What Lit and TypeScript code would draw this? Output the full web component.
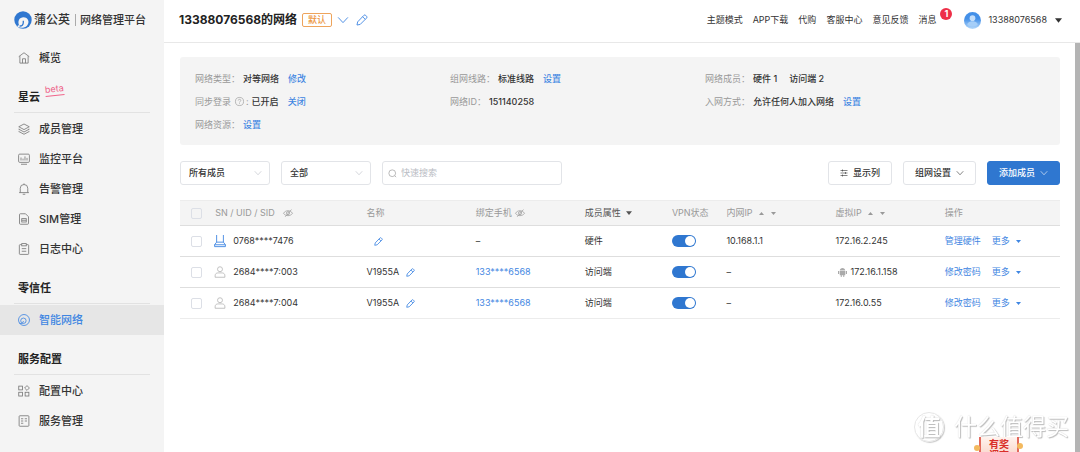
import { LitElement, html, css, svg, nothing } from "lit";
import { customElement, property } from "lit/decorators.js";
import { classMap } from "lit/directives/class-map.js";

const ICONS: Record<string, unknown> = {
  home: svg`<path d="M1 6.2 8 1l7 5.2M2.5 5.5v9.3h11V5.5M6 14.8V9h4v5.8"/>`,
  layers: svg`<path d="M8 1.3 15 5 8 8.8 1 5zM1.6 7.8 1 8.2 8 12l7-3.8-.6-.4M1.6 10.9l-.6.4L8 15l7-3.7-.6-.4"/>`,
  monitor: svg`<rect x=".8" y="1.5" width="14.4" height="11" rx="1.5"/><path d="M4 15h8M4 6v4M6.7 7.5V10M9.3 4.5V10M12 6.5V10"/>`,
  bell: svg`<path d="M1.5 12.8h13M3 12.8V7a5 5 0 0 1 10 0v5.8M8 .6V2M6.3 15h3.4"/>`,
  sim: svg`<path d="M2 2.2Q2 1 3.2 1H10l4 4v8.8q0 1.2-1.2 1.2H3.2Q2 15 2 13.8z"/><rect x="5" y="7.5" width="6" height="4.5"/><path d="M5 9.7h6"/>`,
  clipboard: svg`<rect x="1.8" y="2.2" width="12.4" height="13" rx="1"/><rect x="5" y=".8" width="6" height="3" fill="#f4f4f4"/><path d="M5 7.5h6M5 11h6"/>`,
  orbit: svg`<circle cx="8" cy="8" r="7.3"/><circle cx="7.2" cy="9" r="3.6"/><path d="M1.5 11.8c1.300 1.400 3.500 1.200 5.200-.4l.5-2"/>`,
  grid: svg`<rect x="1" y="1.5" width="5" height="5"/><path d="m12 .8 3.2 3.2L12 7.2 8.8 4z"/><rect x="1" y="9.7" width="5" height="5"/><rect x="9.5" y="9.7" width="5" height="5"/>`,
  list: svg`<rect x="1.5" y="1" width="13" height="14" rx="1"/><path d="M4 5h3M9 5h3M4 8h3M9 8h3M4 11h3"/>`,
  chevron: svg`<path d="m1.5 4.5 6.5 7 6.5-7"/>`,
  pencil: svg`<path d="m1.3 14.7.9-4.2 8.3-8.7q1.200-1.200 2.400 0l1.200 1.200q1.200 1.200 0 2.400L5.600 13.900zM8.800 3.600l3.500 3.500"/>`,
  search: svg`<circle cx="7.5" cy="7.5" r="6"/><path d="m12 12 2.5 2.5"/>`,
  sliders: svg`<path d="M1 3h14M1 8h14M1 13h14M5 1v4M11 6v4M5 11v4"/>`,
  help: svg`<circle cx="8" cy="8" r="7.2"/><path d="M5.7 6.3C5.7 3.3 10.3 3.4 10.3 6.2 10.3 7.800 8 8 8 9.800M8 11.200v1.400"/>`,
  eyeoff: svg`<path d="M.8 8.500C4 3 12 3 15.200 8.500 12 13.500 4 13.500.8 8.500zM13.500 2.500 3.500 14"/><circle cx="8" cy="8.300" r="2.500"/>`,
  router: svg`<path d="M3.500 0v9.500M12.500 0v9.500M3.500 9.500h9l2.700 3.500v2.500H.8V13zM.8 13h14.400"/>`,
  user: svg`<circle cx="8" cy="4.300" r="3.300"/><path d="M1.500 15v-1.800c0-4.300 3-4 6.500-4s6.500-.3 6.500 4V15z"/>`,
};

const icon = (name: string, cls = "") =>
  html`<svg class="icon ${cls}" viewBox="0 0 16 16" aria-hidden="true">${ICONS[name]}</svg>`;

const caret = (up = false, cls = "") =>
  html`<svg class="caret ${cls}" viewBox="0 0 8 8" aria-hidden="true"><path d=${up ? "M0 6.5 4 1.5l4 5z" : "M0 1.5h8l-4 5z"} /></svg>`;

const base = css`
  * { box-sizing: border-box; }
  a { color: #3f86e2; text-decoration: none; }
  button, input, select { font: inherit; color: inherit; margin: 0; }
  .icon {
    width: 12px; height: 12px; flex: none; fill: none;
    stroke: currentColor; stroke-width: 1.2; overflow: visible;
  }
  .caret { width: 6px; height: 6px; flex: none; fill: currentColor; }
`;

interface NavItem { icon: string; label: string; active?: boolean }
interface NavGroup { title?: string; beta?: boolean; items: NavItem[] }

const NAV: NavGroup[] = [
  { items: [{ icon: "home", label: "概览" }] },
  {
    title: "星云", beta: true,
    items: [
      { icon: "layers", label: "成员管理" },
      { icon: "monitor", label: "监控平台" },
      { icon: "bell", label: "告警管理" },
      { icon: "sim", label: "SIM管理" },
      { icon: "clipboard", label: "日志中心" },
    ],
  },
  { title: "零信任", items: [{ icon: "orbit", label: "智能网络", active: true }] },
  {
    title: "服务配置",
    items: [{ icon: "grid", label: "配置中心" }, { icon: "list", label: "服务管理" }],
  },
];

@customElement("side-nav")
export class SideNav extends LitElement {
  static styles = [base, css`
    :host { display: block; background: #f4f4f4; color: #333; font-size: 11px; }
    .brand { display: flex; align-items: center; height: 43px; padding: 0 14px 4px; white-space: nowrap; }
    .logo { width: 18px; height: 18px; margin-right: 2px; flex: none; }
    .name { font-size: 12px; font-weight: 500; }
    .product { margin-left: 5px; padding-left: 4px; border-left: 1px solid #aaa; line-height: 12px; font-weight: 500; }
    .item {
      display: flex; align-items: center; gap: 9px; height: 30px;
      padding-left: 18px; color: #333; font-weight: 500;
    }
    .item .icon { color: #777; stroke-width: 1.1; }
    .active { background: #e6e6e6; color: #3f86e2; }
    .active .icon { color: #3f86e2; }
    .title {
      display: flex; gap: 5px; margin: 0 14px 1px; padding: 16px 4px 7px;
      border-bottom: 1px solid #e2e2e2; font-size: 11px; line-height: 16px; font-weight: 700; color: #222;
    }
    .beta {
      align-self: flex-start; height: 12px; border-bottom: 1px solid #f0648a;
      color: #ee6288; font-size: 9px; line-height: 10px; font-weight: 400; transform: translateY(-5px) rotate(-6deg);
    }
  `];

  render() {
    return html`
      <div class="brand">
        <svg class="logo" viewBox="0 0 18 18" aria-hidden="true">
          <circle cx="9" cy="9" r="8.7" fill="#2f77d0" />
          <path d="M2 14.500C3.500 15.300 4.600 14.900 4.900 13.800 3.500 10 5.600 6.300 9.400 6.300c4.800 0 6.700 5.200 3.600 8.400-2.400 2.400-6.500 2.500-8.800 1.300z" fill="#f4f4f4" />
          <path d="M5.600 15c2.200.2 3.700-1 3.700-3.400V9.800" fill="none" stroke="#2f77d0" stroke-width="1.300" />
        </svg>
        <span class="name">蒲公英</span><span class="product">网络管理平台</span>
      </div>
      <nav>
        ${NAV.map((g) => html`
          ${g.title
            ? html`<div class="title">${g.title}${g.beta ? html`<span class="beta">beta</span>` : nothing}</div>`
            : nothing}
          ${g.items.map((i) => html`
            <a href="#" class=${classMap({ item: true, active: !!i.active })}>${icon(i.icon)}${i.label}</a>`)}
        `)}
      </nav>`;
  }
}

@customElement("top-bar")
export class TopBar extends LitElement {
  @property() account = "13388076568";

  static styles = [base, css`
    :host {
      display: flex; align-items: center; height: 43px; padding: 0 18px 2px 15px;
      border-bottom: 1px solid #e8e8e8; color: #333; white-space: nowrap;
    }
    h1 { margin: 0 5px 0 0; font-size: 12px; font-weight: 700; color: #222; }
    .tag {
      padding: 0 5px; border: 1px solid #eea45c; border-radius: 2px;
      color: #ec963f; font-size: 9px; line-height: 12px; font-weight: 500;
    }
    .bare { display: flex; padding: 0; border: 0; background: none; color: #3f86e2; }
    .tag + .bare { margin: 0 7px 0 5px; }
    .links { display: flex; gap: 10px; margin-left: auto; }
    .links a { position: relative; color: #333; }
    .badge {
      position: absolute; left: 22px; top: -5px; width: 12px; height: 12px; border-radius: 50%;
      background: #ee2f48; color: #fff; font-size: 9px; line-height: 12px; text-align: center; font-weight: 700;
    }
    .avatar { width: 17px; height: 17px; margin: 0 7px 0 28px; }
    .user { display: flex; align-items: center; gap: 8px; padding: 0; border: 0; background: none; }
    .user .caret { width: 7px; height: 7px; }
  `];

  render() {
    return html`
      <h1>${this.account}的网络</h1>
      <span class="tag">默认</span>
      <button class="bare" aria-label="切换网络">${icon("chevron")}</button>
      <button class="bare" aria-label="重命名">${icon("pencil")}</button>
      <nav class="links">
        ${["主题模式", "APP下载", "代购", "客服中心", "意见反馈"].map((t) => html`<a href="#">${t}</a>`)}
        <a href="#">消息<span class="badge">1</span></a>
      </nav>
      <svg class="avatar" viewBox="0 0 18 18" aria-hidden="true">
        <defs><linearGradient id="g" x2="0" y2="1"><stop offset=".4" stop-color="#4490e8" /><stop offset="1" stop-color="#b5d9fb" /></linearGradient></defs>
        <circle cx="9" cy="9" r="9" fill="url(#g)" />
        <circle cx="9" cy="6.5" r="3" fill="#c3defa" />
        <path d="M3.5 13.5c0-5 11-5 11 0-2.5 2.5-8.5 2.5-11 0z" fill="#a5cef8" />
      </svg>
      <button class="user">${this.account}${caret()}</button>`;
  }
}

@customElement("network-info")
export class NetworkInfo extends LitElement {
  static styles = [base, css`
    :host {
      display: grid; grid-template-columns: 30% 30% 1fr; padding: 10px 15px 9px;
      background: #f4f4f4; border-radius: 3px; white-space: nowrap;
    }
    dl { margin: 0; }
    .row { display: flex; align-items: center; height: 23px; }
    dt { display: flex; align-items: center; color: #999; }
    dd { margin: 0 0 0 3px; color: #333; font-weight: 500; }
    dd + dd { margin-left: 9px; }
    .members { margin-left: 12px; }
    .icon { width: 9px; height: 9px; margin: 0 2px 0 4px; }
  `];

  render() {
    return html`
      <dl>
        <div class="row"><dt>网络类型：</dt><dd>对等网络</dd><dd><a href="#">修改</a></dd></div>
        <div class="row"><dt>同步登录${icon("help")}:</dt><dd>已开启</dd><dd><a href="#">关闭</a></dd></div>
        <div class="row"><dt>网络资源：</dt><dd><a href="#">设置</a></dd></div>
      </dl>
      <dl>
        <div class="row"><dt>组网线路：</dt><dd>标准线路</dd><dd><a href="#">设置</a></dd></div>
        <div class="row"><dt>网络ID：</dt><dd>151140258</dd></div>
      </dl>
      <dl>
        <div class="row"><dt>网络成员：</dt><dd>硬件 1<span class="members">访问端 2</span></dd></div>
        <div class="row"><dt>入网方式：</dt><dd>允许任何人加入网络</dd><dd><a href="#">设置</a></dd></div>
      </dl>`;
  }
}

@customElement("member-toolbar")
export class MemberToolbar extends LitElement {
  static styles = [base, css`
    :host { display: flex; gap: 11px; color: #333; white-space: nowrap; }
    .box {
      display: flex; align-items: center; height: 24px;
      border: 1px solid #e2e4e8; border-radius: 3px; background: #fff;
    }
    .select { display: grid; width: 90px; align-items: center; }
    select {
      grid-area: 1 / 1; width: 100%; height: 22px; padding: 0 24px 0 8px;
      border: 0; background: none; appearance: none; outline: none; font-weight: 500;
    }
    .select .icon { grid-area: 1 / 1; justify-self: end; width: 8px; height: 8px; margin-right: 7px; color: #b8bcc4; pointer-events: none; }
    .search { flex: 0 1 180px; gap: 4px; padding: 0 5px; }
    .search .icon { width: 9px; height: 9px; color: #999; }
    input { flex: 1; min-width: 0; padding: 0; border: 0; outline: none; background: none; }
    input::placeholder { color: #b9bcc4; opacity: 1; }
    .actions { display: flex; gap: 11px; margin-left: auto; }
    button { gap: 5px; padding: 0 11px; font-weight: 500; }
    button .icon { width: 8px; height: 8px; }
    .primary { background: #2f77d0; border-color: #2f77d0; color: #fff; }
  `];

  render() {
    return html`
      <label class="box select"><select aria-label="成员类型"><option>所有成员</option></select>${icon("chevron")}</label>
      <label class="box select"><select aria-label="状态"><option>全部</option></select>${icon("chevron")}</label>
      <label class="box search">${icon("search")}<input type="search" aria-label="快速搜索" placeholder="快速搜索" /></label>
      <div class="actions">
        <button class="box">${icon("sliders")}显示列</button>
        <button class="box">组网设置${icon("chevron")}</button>
        <button class="box primary">添加成员${icon("chevron")}</button>
      </div>`;
  }
}

interface Member {
  sn: string; device: string; name?: string; phone?: string; kind: string;
  lan: string; ip: string; android?: boolean; action: string;
}

const MEMBERS: Member[] = [
  { sn: "0768****7476", device: "router", kind: "硬件", lan: "10.168.1.1", ip: "172.16.2.245", action: "管理硬件" },
  { sn: "2684****7:003", device: "user", name: "V1955A", phone: "133****6568", kind: "访问端", lan: "–", ip: "172.16.1.158", android: true, action: "修改密码" },
  { sn: "2684****7:004", device: "user", name: "V1955A", phone: "133****6568", kind: "访问端", lan: "–", ip: "172.16.0.55", action: "修改密码" },
];

@customElement("member-table")
export class MemberTable extends LitElement {
  static styles = [base, css`
    :host { display: block; color: #333; }
    table { width: 100%; border-collapse: collapse; table-layout: fixed; white-space: nowrap; }
    th, td { height: 31px; padding: 0; text-align: left; font-weight: 400; border-bottom: 1px solid #dedede; }
    th { height: 25px; background: #f4f4f4; color: #999; border-top: 1px solid #ececec; }
    tbody tr:last-child td { border-bottom-color: #ececec; }
    .check { width: 4%; padding-left: 11px; }
    .sn { width: 17.2%; }
    .mid { width: 12.4%; }
    .kind { width: 9.9%; }
    .vpn { width: 6.2%; }
    .cell { display: flex; align-items: center; }
    .dark { color: #555; }
    .box {
      display: block; appearance: none; width: 11px; height: 11px; margin: 0;
      border: 1px solid #dcdfe6; border-radius: 2px;
    }
    .eye { width: 10px; height: 10px; margin-left: 8px; color: #999; }
    .near { margin-left: 3px; }
    .caret { margin-left: 6px; width: 5px; height: 5px; }
    .caret + .caret { margin-left: 7px; }
    .dark .caret { margin-left: 5px; width: 6px; height: 6px; }
    .device { width: 12px; height: 12px; margin: 0 7px 0 -1px; color: #bbb; }
    .router { color: #3f86e2; }
    .edit { display: flex; margin-left: 7px; padding: 0; border: 0; background: none; color: #3f86e2; }
    .edit .icon { width: 9px; height: 9px; stroke-width: 1.5; }
    .toggle {
      display: flex; align-items: center; justify-content: flex-end; appearance: none;
      width: 24px; height: 12px; margin: 0; padding: 1px; border-radius: 6px; background: #2f77d0;
    }
    .toggle::before { content: ""; width: 10px; height: 10px; border-radius: 50%; background: #fff; }
    .android { width: 9px; height: 10px; margin: 0 4px 0 2px; fill: #aaa; }
    .ops { gap: 11px; }
    .more { display: flex; align-items: center; }
  `];

  render() {
    return html`
      <table>
        <thead>
          <tr>
            <th class="check"><input class="box" type="checkbox" aria-label="全选" /></th>
            <th class="sn"><div class="cell">SN / UID / SID${icon("eyeoff", "eye")}</div></th>
            <th class="mid">名称</th>
            <th class="mid"><div class="cell">绑定手机${icon("eyeoff", "eye near")}</div></th>
            <th class="kind"><div class="cell dark">成员属性${caret()}</div></th>
            <th class="vpn">VPN状态</th>
            <th class="mid"><div class="cell">内网IP${caret(true)}${caret()}</div></th>
            <th class="mid"><div class="cell">虚拟IP${caret(true)}${caret()}</div></th>
            <th>操作</th>
          </tr>
        </thead>
        <tbody>
          ${MEMBERS.map((m) => html`
            <tr>
              <td class="check"><input class="box" type="checkbox" aria-label=${m.sn} /></td>
              <td><div class="cell">${icon(m.device, `device ${m.device}`)}${m.sn}</div></td>
              <td><div class="cell">${m.name ?? nothing}<button class="edit" aria-label="编辑名称">${icon("pencil")}</button></div></td>
              <td>${m.phone ? html`<a href="#">${m.phone}</a>` : "–"}</td>
              <td>${m.kind}</td>
              <td><input class="toggle" type="checkbox" role="switch" aria-label="VPN状态" checked /></td>
              <td>${m.lan}</td>
              <td><div class="cell">
                ${m.android
                  ? html`<svg class="android" viewBox="0 0 18 20" aria-hidden="true"><path d="M3.5 7C3.7 0 14.3 0 14.5 7zM3.5 8h11v8.5h-2V20h-2v-3.5h-3V20h-2v-3.5h-2zM0 8h2.3v6H0zM15.7 8H18v6h-2.3zM5 0l1.5 3M13 0l-1.5 3" /></svg>`
                  : nothing}${m.ip}</div></td>
              <td><div class="cell ops"><a href="#">${m.action}</a><a href="#" class="more">更多${caret()}</a></div></td>
            </tr>`)}
        </tbody>
      </table>`;
  }
}

@customElement("app-root")
export class AppRoot extends LitElement {
  static styles = [base, css`
    :host {
      display: grid; grid-template-columns: 164px minmax(0, 1fr); height: 100vh; overflow: hidden;
      background: #fff; font-family: Inter, "Noto Sans CJK SC", sans-serif; font-size: 9px; line-height: 14px;
    }
    .page { display: flex; flex-direction: column; min-width: 0; }
    .body { display: flex; flex: 1; min-height: 0; }
    main { flex: 1; min-width: 0; display: flex; flex-direction: column; padding: 14px 15px 0 16px; }
    member-toolbar { margin: 16px 0 15px; }
    .track { width: 5px; background: #b4b4b4; }
    .mark {
      position: fixed; right: 11px; bottom: 9px; display: flex; align-items: center; gap: 10px;
      color: #fff; font-size: 23px; line-height: 32px; text-shadow: 1px 1px 1px #bbb, 0 0 1px #ccc;
    }
    .seal {
      width: 30px; height: 30px; border: 1px solid #e6e6e6; border-radius: 50%;
      box-shadow: 1px 1px 1px #ccc; text-align: center; line-height: 28px; font-weight: 700;
    }
    .prize {
      position: fixed; right: 61px; bottom: 0; width: 40px; height: 15px; overflow: hidden;
      padding-top: 2px; border-left: 2px solid #e3695c; border-right: 2px solid #e3695c;
      background: linear-gradient(#fff3ee, #fbdcd2); color: #d92f2a; font-weight: 700; font-size: 10px; line-height: 11px;
      text-align: center;
    }
    .knob { position: fixed; bottom: 1px; right: 100px; width: 6px; height: 6px; border-radius: 50%; background: #f3b95f; }
    .end { right: 57px; bottom: 3px; }
  `];

  render() {
    return html`
      <side-nav></side-nav>
      <div class="page">
        <top-bar></top-bar>
        <div class="body">
          <main>
            <network-info></network-info>
            <member-toolbar></member-toolbar>
            <member-table></member-table>
          </main>
          <div class="track"></div>
        </div>
      </div>
      <div class="mark"><span class="seal">值</span>什么值得买</div>
      <a class="prize" href="#">有奖<br />调查</a>
      <span class="knob"></span><span class="knob end"></span>`;
  }
}
